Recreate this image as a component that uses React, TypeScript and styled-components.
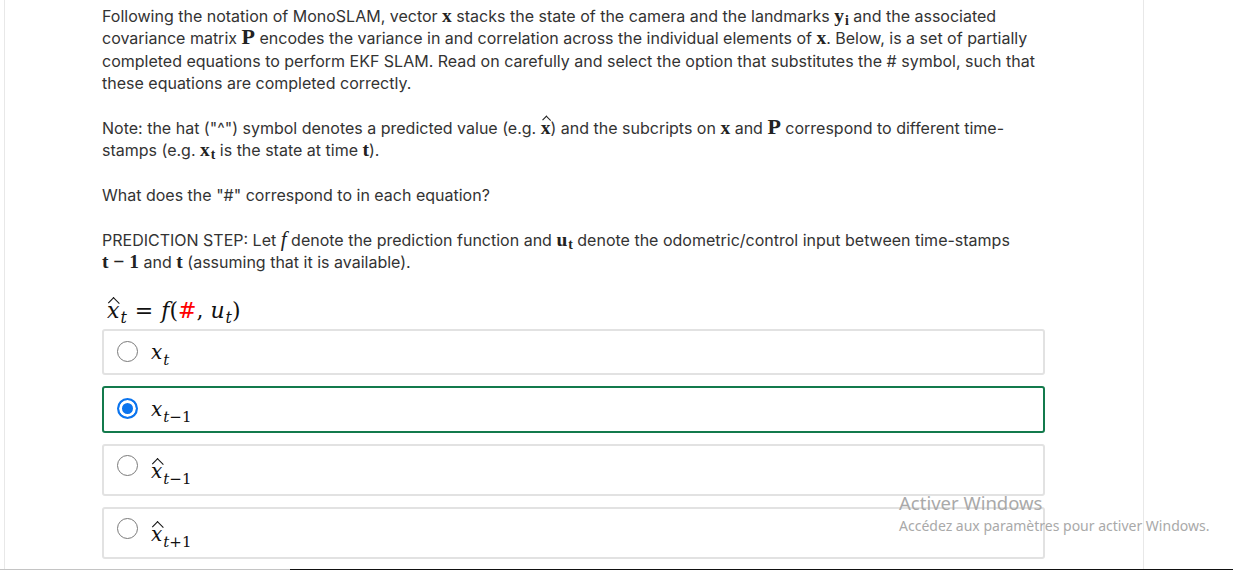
import React from "react";
import styled, { createGlobalStyle, css } from "styled-components";

const GlobalStyle = createGlobalStyle`
  html, body {
    margin: 0;
    padding: 0;
    background: #ffffff;
    overflow: hidden;
  }
  * { box-sizing: border-box; }
`;

const Shell = styled.div`
  position: relative;
  width: 1233px;
  height: 570px;
  display: flex;
  flex-direction: column;
  background: #fff;
`;

const Frame = styled.div`
  flex: 1;
  display: flex;
  min-height: 0;
`;

const Gutter = styled.div`
  width: 5px;
  border-right: 1px solid #e8e8e8;
`;

const Main = styled.main`
  width: 1139px;
  border-right: 1px solid #e8e8e8;
  padding: 5px 0 0 97px;
  font-family: Inter, "Noto Sans", sans-serif;
  font-size: 16px;
  line-height: 22.4px;
  color: #333333;
`;

const Text = styled.div`
  width: 940px;
`;

const Para = styled.p`
  margin: 0 0 22.4px 0;
`;

const Bottom = styled.div`
  height: 1px;
  display: flex;
`;

const BottomSeg = styled.div<{ $dark?: boolean }>`
  width: ${(p) => (p.$dark ? "auto" : "290px")};
  flex: ${(p) => (p.$dark ? 1 : "none")};
  background: ${(p) => (p.$dark ? "#111111" : "#c4c4c4")};
`;

const MB = styled.span<{ $big?: boolean }>`
  font-family: "Liberation Serif", "DejaVu Serif", serif;
  font-weight: bold;
  font-size: ${(p) => (p.$big ? "22px" : "19.5px")};
  line-height: 16px;
  white-space: nowrap;
  color: #222;
`;

const MI = styled.span`
  font-family: "Liberation Serif", "DejaVu Serif", serif;
  font-style: italic;
  font-size: 21px;
  line-height: 16px;
  color: #222;
`;

const BSub = styled.span`
  font-size: 0.7em;
  vertical-align: -0.2em;
  line-height: 0;
  margin-left: 1px;
`;

const HatBox = styled.span<{ $w?: number }>`
  position: relative;
  display: inline-block;
  line-height: 1;
  &::before {
    content: "";
    position: absolute;
    left: 50%;
    top: -0.05em;
    width: ${(p) => p.$w ?? 6}px;
    height: ${(p) => p.$w ?? 6}px;
    border-top: 1.6px solid currentColor;
    border-left: 1.6px solid currentColor;
    transform: translateX(-40%) rotate(45deg) scaleX(1.1);
    transform-origin: center;
  }
`;

const Equation = styled.div`
  margin: 0 0 4px 5px;
  height: 29px;
  font-family: "DejaVu Serif", "Liberation Serif", serif;
  font-size: 22px;
  line-height: 29px;
  color: #111;
`;

const It = styled.span`
  font-style: italic;
`;

const Op = styled.span`
  margin: 0 8px;
`;

const Red = styled.span`
  color: #ff0000;
`;

const ESub = styled.span`
  font-style: italic;
  font-size: 0.72em;
  vertical-align: -0.3em;
  line-height: 0;
  margin-left: 1px;
`;

const Options = styled.div`
  width: 943px;
  display: flex;
  flex-direction: column;
  gap: 11px;
`;

const OptionBox = styled.div<{ $selected?: boolean; $tall?: boolean }>`
  height: ${(p) => (p.$tall ? 52 : p.$selected ? 47 : 46)}px;
  border: 2px solid ${(p) => (p.$selected ? "#137a4c" : "#e2e2e2")};
  border-radius: 3px;
  display: flex;
  align-items: flex-start;
  padding: ${(p) => (p.$tall ? 8 : 9)}px 14px 0 13px;
  gap: 13px;
`;

const Radio = styled.span<{ $checked?: boolean }>`
  flex: none;
  width: 21px;
  height: 21px;
  border-radius: 50%;
  margin-top: 1px;
  ${(p) =>
    p.$checked
      ? css`
          border: 2px solid #0b74ee;
          background: #0b74ee;
          box-shadow: inset 0 0 0 3px #ffffff;
        `
      : css`
          border: 1px solid #7a7a7a;
          background: #fff;
        `}
`;

const OptLabel = styled.span<{ $tall?: boolean }>`
  font-family: "DejaVu Serif", "Liberation Serif", serif;
  font-style: italic;
  font-size: 20px;
  line-height: 22px;
  color: #111;
  margin-top: ${(p) => (p.$tall ? 6 : 1)}px;
`;

const OSub = styled.span`
  font-size: 0.75em;
  vertical-align: -0.4em;
  margin-left: 1px;
`;

const Upright = styled.span`
  font-style: normal;
`;

const Watermark = styled.div`
  position: absolute;
  left: 899px;
  top: 491px;
  font-family: "Noto Sans", "Open Sans", sans-serif;
  color: #a9a9a9;
  pointer-events: none;
`;

const WmTitle = styled.div`
  font-size: 18.5px;
  line-height: 24px;
`;

const WmLine = styled.div`
  font-size: 14px;
  line-height: 20px;
  margin-top: 1px;
`;

type Opt = { base: string; sub: React.ReactNode; hat?: boolean; selected?: boolean };

const options: Opt[] = [
  { base: "x", sub: "t" },
  { base: "x", sub: <>t<Upright>−1</Upright></>, selected: true },
  { base: "x", sub: <>t<Upright>−1</Upright></>, hat: true },
  { base: "x", sub: <>t<Upright>+1</Upright></>, hat: true },
];

export default function App() {
  return (
    <Shell>
      <GlobalStyle />
      <Frame>
        <Gutter />
        <Main>
          <Text>
            <Para>
              Following the notation of MonoSLAM, vector <MB>x</MB> stacks the state of the camera and
              the landmarks{" "}
              <MB>
                y<BSub>i</BSub>
              </MB>{" "}
              and the associated covariance matrix <MB $big>P</MB> encodes the variance in and
              correlation across the individual elements of <MB>x</MB>. Below, is a set of partially
              completed equations to perform EKF SLAM. Read on carefully and select the option that
              substitutes the # symbol, such that these equations are completed correctly.
            </Para>
            <Para>
              Note: the hat ("^") symbol denotes a predicted value (e.g.{" "}
              <MB>
                <HatBox $w={5}>x</HatBox>
              </MB>
              ) and the subcripts on <MB>x</MB> and <MB $big>P</MB> correspond to different
              time-stamps (e.g.{" "}
              <MB>
                x<BSub>t</BSub>
              </MB>{" "}
              is the state at time <MB>t</MB>).
            </Para>
            <Para>What does the "#" correspond to in each equation?</Para>
            <Para>
              PREDICTION STEP: Let <MI>f</MI> denote the prediction function and{" "}
              <MB>
                u<BSub>t</BSub>
              </MB>{" "}
              denote the odometric/control input between time-stamps <MB>t − 1</MB> and <MB>t</MB>{" "}
              (assuming that it is available).
            </Para>
          </Text>
          <Equation>
            <It>
              <HatBox $w={7}>x</HatBox>
            </It>
            <ESub>t</ESub>
            <Op>=</Op>
            <It>f</It>(<Red>#</Red>, <It>u</It>
            <ESub>t</ESub>)
          </Equation>
          <Options>
            {options.map((o, i) => (
              <OptionBox key={i} $selected={o.selected} $tall={o.hat}>
                <Radio $checked={o.selected} />
                <OptLabel $tall={o.hat}>
                  {o.hat ? <HatBox $w={7}>{o.base}</HatBox> : o.base}
                  <OSub>{o.sub}</OSub>
                </OptLabel>
              </OptionBox>
            ))}
          </Options>
        </Main>
      </Frame>
      <Bottom>
        <BottomSeg />
        <BottomSeg $dark />
      </Bottom>
      <Watermark>
        <WmTitle>Activer Windows</WmTitle>
        <WmLine>Accédez aux paramètres pour activer Windows.</WmLine>
      </Watermark>
    </Shell>
  );
}
